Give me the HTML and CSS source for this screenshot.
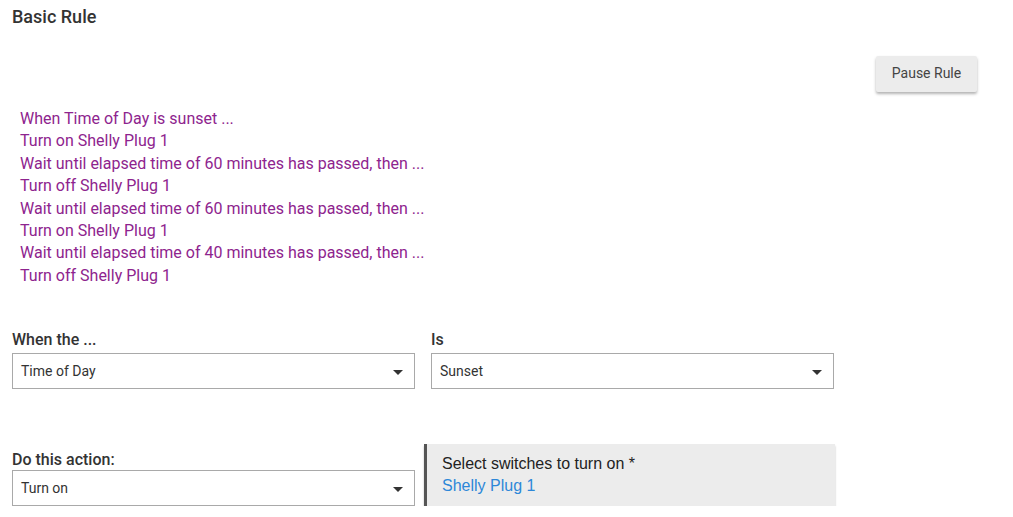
FILE: index.html
```html
<!DOCTYPE html>
<html>
<head>
<meta charset="utf-8">
<link rel="stylesheet" href="styles.css">
</head>
<body>
<div class="page">
  <h1 class="title">Basic Rule</h1>
  <div class="toolbar">
    <button class="btn">Pause Rule</button>
  </div>
  <div class="summary">
    <div>When Time of Day is sunset ...</div>
    <div>Turn on Shelly Plug 1</div>
    <div>Wait until elapsed time of 60 minutes has passed, then ...</div>
    <div>Turn off Shelly Plug 1</div>
    <div>Wait until elapsed time of 60 minutes has passed, then ...</div>
    <div>Turn on Shelly Plug 1</div>
    <div>Wait until elapsed time of 40 minutes has passed, then ...</div>
    <div>Turn off Shelly Plug 1</div>
  </div>
  <div class="row row-when">
    <div class="field">
      <div class="label">When the ...</div>
      <div class="select"><span>Time of Day</span><span class="arrow"></span></div>
    </div>
    <div class="field">
      <div class="label">Is</div>
      <div class="select"><span>Sunset</span><span class="arrow"></span></div>
    </div>
  </div>
  <div class="row row-action">
    <div class="field">
      <div class="label">Do this action:</div>
      <div class="select"><span>Turn on</span><span class="arrow"></span></div>
    </div>
    <div class="panel">
      <div class="panel-label">Select switches to turn on *</div>
      <div class="panel-value">Shelly Plug 1</div>
    </div>
  </div>
</div>
</body>
</html>
```
FILE: styles.css
```css
html, body {
  margin: 0;
  padding: 0;
  background: #fff;
}
.page {
  padding: 7px 12px 0 12px;
  font-family: Roboto, "Liberation Sans", sans-serif;
  color: #333;
}
.title {
  margin: 0;
  font-size: 18px;
  line-height: 20px;
  font-weight: 500;
  color: #333;
}
.toolbar {
  display: flex;
  justify-content: flex-end;
  margin-top: 29px;
  padding-right: 24px;
}
.btn {
  width: 101px;
  height: 36px;
  border: none;
  border-radius: 2px;
  background: #ececec;
  font-family: Roboto, "Liberation Sans", sans-serif;
  font-size: 14px;
  color: #444;
  box-shadow: 0 2px 3px rgba(0,0,0,0.3);
  padding: 0 0 2px 0;
}
.summary {
  margin-top: 16px;
  padding-left: 8px;
  font-size: 16px;
  line-height: 22.4px;
  color: #8e248e;
}
.row {
  display: grid;
  grid-template-columns: 403px 403px;
  column-gap: 16px;
}
.row-when {
  margin-top: 44px;
}
.row-action {
  margin-top: 55px;
  align-items: end;
}
.label {
  font-size: 16px;
  line-height: 18px;
  font-weight: 500;
  color: #333;
  margin-bottom: 4px;
}
.row-action .label {
  margin-bottom: 1px;
}
.select {
  box-sizing: border-box;
  height: 36px;
  border: 1px solid #a9a9a9;
  display: flex;
  align-items: center;
  justify-content: space-between;
  padding: 0 11px 0 8px;
  font-size: 14px;
  color: #333;
}
.select span:first-child {
  margin-top: -1px;
}
.arrow {
  width: 0;
  height: 0;
  border-left: 5px solid transparent;
  border-right: 5px solid transparent;
  border-top: 5px solid #333;
  margin-top: 2px;
}
.panel {
  box-sizing: border-box;
  margin-left: -7px;
  width: 411px;
  height: 62px;
  background: #ececec;
  border-left: 3px solid #555;
  padding: 9px 15px 0 15px;
  box-shadow: 0 2px 2px rgba(0,0,0,0.25);
  font-family: "Liberation Sans", Arial, sans-serif;
  font-size: 16px;
  line-height: 22px;
}
.panel-label {
  color: #222;
}
.panel-value {
  color: #2d87d8;
}
```
